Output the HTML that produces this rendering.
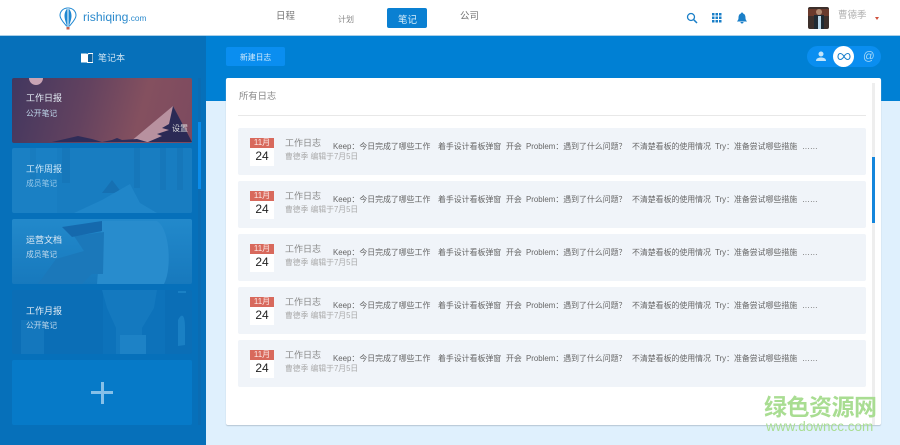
<!DOCTYPE html>
<html>
<head>
<meta charset="utf-8">
<style>
html,body{margin:0;padding:0}
body{width:900px;height:445px;overflow:hidden;position:relative;background:#dff0fd;font-family:"Liberation Sans","Noto Sans CJK SC",sans-serif;}
div,span,svg{position:absolute;white-space:nowrap}
.nav{font-size:9.5px;color:#777;line-height:12px}
.nb{left:12px;width:180px;height:65px;border-radius:2px;overflow:hidden}
.t1{left:14px;top:15px;font-size:9px;line-height:12px;color:#e4edf5}
.t2{left:14px;top:31px;font-size:7.8px;line-height:10px;color:#c0d9ec}
.row{left:238px;width:628px;height:47px;background:#f0f4f9;border-radius:2px}
.dh{left:12px;top:10px;width:24px;height:10px;background:#d8695c;color:#fbe9e6;font-size:8px;line-height:10px;text-align:center}
.db{left:12px;top:20px;width:24px;height:18px;background:#fff;color:#222;font-size:12px;line-height:16px;text-align:center}
.ti{left:47px;top:9px;font-size:9px;line-height:12px;color:#888}
.de{left:95px;top:13px;font-size:7.9px;line-height:11px;color:#666}
.su{left:47px;top:24px;font-size:7.8px;line-height:10px;color:#aaa}
</style>
</head>
<body>
<!-- header -->
<div style="left:0;top:0;width:900px;height:35px;background:#fff;border-bottom:1px solid #a9cfe8"></div>
<svg style="left:59px;top:7px" width="18" height="23" viewBox="0 0 18 23">
<path d="M9 1C4 1 1 4.500 1 8.500C1 12 5 16 7.500 19H10.500C13 16 17 12 17 8.500C17 4.500 14 1 9 1Z" fill="#fff" stroke="#1f88d2" stroke-width="1"/>
<path d="M9 1C6.500 3 5.500 6 5.500 9C5.500 12 7 16 8 19H10C11 16 12.500 12 12.500 9C12.500 6 11.500 3 9 1Z" fill="#1f88d2"/>
<path d="M9 1V19" stroke="#fff" stroke-width="1"/>
<rect x="7.500" y="20" width="3" height="2.500" fill="#c8604f"/>
</svg>
<div style="left:83px;top:10px;font-size:12.2px;line-height:15px;color:#2d8bcd">rishiqing<span style="position:static;font-size:8.3px">.com</span></div>
<div class="nav" style="left:276px;top:11px">日程</div>
<div class="nav" style="left:338px;top:14px;font-size:8px;color:#888">计划</div>
<div style="left:387px;top:8px;width:40px;height:20px;background:#0a80d2;border-radius:2px"></div>
<div class="nav" style="left:398px;top:15px;color:#d9eefb">笔记</div>
<div class="nav" style="left:460px;top:11px">公司</div>
<svg style="left:686px;top:12px" width="12" height="12" viewBox="0 0 12 12"><circle cx="5" cy="5" r="3.500" fill="none" stroke="#1a7fc8" stroke-width="1.300"/><path d="M7.800 7.800L11 11" stroke="#1a7fc8" stroke-width="1.500"/></svg>
<svg style="left:712px;top:13px" width="10" height="10" viewBox="0 0 10 10" fill="#1a7fc8"><rect x="0" y="0" width="2.500" height="2.500"/><rect x="3.500" y="0" width="2.500" height="2.500"/><rect x="7" y="0" width="2.500" height="2.500"/><rect x="0" y="3.500" width="2.500" height="2.500"/><rect x="3.500" y="3.500" width="2.500" height="2.500"/><rect x="7" y="3.500" width="2.500" height="2.500"/><rect x="0" y="7" width="2.500" height="2.500"/><rect x="3.500" y="7" width="2.500" height="2.500"/><rect x="7" y="7" width="2.500" height="2.500"/></svg>
<svg style="left:736px;top:12px" width="12" height="12" viewBox="0 0 12 12" fill="#1a7fc8"><path d="M6 0.500C7 .5 7 1.500 7 1.500C9 2 9.500 4 9.500 6C9.500 8 10.500 8.500 11 9.500H1C1.500 8.500 2.500 8 2.500 6C2.500 4 3 2 5 1.500C5 1.500 5 .5 6 .5Z"/><path d="M4.500 10H7.500C7.500 11 7 11.500 6 11.500C5 11.500 4.500 11 4.500 10Z"/></svg>
<div style="left:808px;top:7px;width:21px;height:22px;background:#3c2f2b;border-radius:2px;overflow:hidden">
<div style="left:0;top:2px;width:21px;height:7px;background:#6a3a2c"></div>
<div style="left:8px;top:2px;width:6px;height:6px;background:#b08a72;border-radius:50%"></div>
<div style="left:6px;top:8px;width:10px;height:14px;background:#1f2a33"></div>
<div style="left:9.500px;top:9px;width:3px;height:13px;background:#b9d6e8"></div>
</div>
<div style="left:838px;top:10px;font-size:9.5px;line-height:12px;color:#b0b0b0">曹德季</div>
<div style="left:875px;top:17px;width:0;height:0;border-left:2.500px solid transparent;border-right:2.500px solid transparent;border-top:3px solid #d0503c"></div>

<!-- sidebar -->
<div style="left:0;top:36px;width:206px;height:409px;background:#0670ba"></div>
<div style="left:198px;top:78px;width:3px;height:347px;background:#0a6cb3"></div>
<div style="left:198px;top:122px;width:3px;height:67px;background:#0a8cea"></div>
<svg style="left:81px;top:53px" width="12" height="10" viewBox="0 0 12 10"><path d="M0 0.500H5.500L6.500 1.500V9.500H0Z" fill="#fff"/><path d="M6.500 1.500L7.500 .5H12V9.500H6.500Z" fill="#0b5f9c" stroke="#fff" stroke-width="1"/></svg>
<div style="left:98px;top:52px;font-size:9px;line-height:12px;color:#cfe4f3">笔记本</div>

<div class="nb" style="top:78px;background:linear-gradient(105deg,#42375f 0%,#63425f 40%,#84505f 70%,#7d4a5f 100%)">
<div style="left:17px;top:-7px;width:14px;height:14px;border-radius:50%;background:#c9a4b4"></div>
<svg style="left:0;top:0" width="180" height="65" viewBox="0 0 180 65">
<path d="M118 64L161 28L168 42L150 64Z" fill="#b8919f"/>
<path d="M161 28L180 64H136L150 58L145 56L157 52L150 50L157 46Z" fill="#2b2a55"/>
<path d="M40 64L66 58L80 61L90 64ZM90 64L100 62L105 60L110 62L125 61L135 64Z" fill="#2f2c58"/>
</svg>
<div class="t1" style="top:14px">工作日报</div><div class="t2">公开笔记</div>
<div style="left:160px;top:46px;font-size:8px;line-height:10px;color:#ddd">设置</div>
</div>

<div class="nb" style="top:148px;background:#1a80c4">
<svg style="left:0;top:0" width="180" height="65" viewBox="0 0 180 65">
<rect x="45" y="0" width="135" height="65" fill="#187dc1"/>
<rect x="18" y="0" width="6" height="35" fill="#187cbf"/><rect x="50" y="0" width="8" height="35" fill="#1677ba"/>
<rect x="122" y="0" width="6" height="40" fill="#1677ba"/><rect x="148" y="0" width="6" height="42" fill="#1677ba"/><rect x="165" y="0" width="6" height="42" fill="#1677ba"/>
<path d="M90 45L100 32L110 45Z" fill="#1670b2"/>
<path d="M62 65L90 52L118 36L128 55L145 65Z" fill="#2086c9"/>
</svg>
<div class="t1" style="color:#cfe7f8">工作周报</div><div class="t2" style="color:#98c9ea">成员笔记</div>
</div>

<div class="nb" style="top:219px;background:linear-gradient(180deg,#2289cb,#1779bd)">
<svg style="left:0;top:0" width="180" height="65" viewBox="0 0 180 65">
<path d="M90 2H145C158 10 160 50 152 65H85Z" fill="#288ccd"/>
<path d="M62 17L92 13L91 55H80L70 65H26L44 40L72 32Z" fill="#1b78ba"/>
<path d="M50 8L90 2L90 12L60 18Z" fill="#1569ad"/>
</svg>
<div class="t1">运营文档</div><div class="t2">成员笔记</div>
</div>

<div class="nb" style="top:290px;height:64px;background:#0b6eb6">
<svg style="left:0;top:0" width="180" height="64" viewBox="0 0 180 64">
<rect x="9" y="30" width="23" height="34" fill="#1477bd"/>
<rect x="91" y="0" width="62" height="64" fill="#0d72ba"/>
<path d="M90 0H145L142 18L130 38V64H104V38L95 18Z" fill="#1479bf"/>
<rect x="108" y="45" width="26" height="19" fill="#1d82c6"/>
<path d="M166 30C170 22 173 25 173 38V55L166 56Z" fill="#1a80c4"/>
<rect x="166" y="1" width="8" height="2" fill="#1a80c4"/>
</svg>
<div class="t1">工作月报</div><div class="t2">公开笔记</div>
</div>

<div class="nb" style="top:360px;background:#067ac8">
<div style="left:79px;top:31px;width:22px;height:3px;background:#86c0e8"></div>
<div style="left:88.500px;top:22px;width:3px;height:22px;background:#86c0e8"></div>
</div>

<!-- main -->
<div style="left:206px;top:36px;width:694px;height:65px;background:#0080d4"></div>
<div style="left:226px;top:47px;width:59px;height:19px;background:#0a8ef0;border-radius:2px"></div>
<div style="left:240px;top:53px;font-size:7.800px;line-height:10px;color:#d4ecfc">新建日志</div>

<div style="left:807px;top:46px;width:74px;height:21px;border-radius:11px;background:#0a8ef0"></div>
<svg style="left:815px;top:51px" width="12" height="11" viewBox="0 0 12 11" fill="#c5e5fa"><circle cx="6" cy="3" r="2.500"/><path d="M1 10C1 7.500 3 6.500 6 6.500C9 6.500 11 7.500 11 10Z"/></svg>
<div style="left:833px;top:46px;width:21px;height:21px;border-radius:50%;background:#fff"></div>
<svg style="left:837px;top:52px" width="14" height="9" viewBox="0 0 14 9"><path d="M7 4.500C5.500 2 4.500 1.500 3.300 1.500C1.800 1.500 1 3 1 4.500C1 6 1.800 7.500 3.300 7.500C4.500 7.500 5.500 7 7 4.500C8.500 2 9.500 1.500 10.700 1.500C12.200 1.500 13 3 13 4.500C13 6 12.200 7.500 10.700 7.500C9.500 7.500 8.500 7 7 4.500Z" fill="none" stroke="#1a80cc" stroke-width="1.100"/></svg>
<div style="left:863px;top:50px;font-size:11.500px;line-height:14px;color:#a9d8f7">@</div>

<!-- card -->
<div style="left:226px;top:78px;width:655px;height:347px;background:#fff;border-radius:2px;box-shadow:0 1px 1px #b5c6d3"></div>
<div style="left:239px;top:90px;font-size:9.300px;line-height:12px;color:#888">所有日志</div>
<div style="left:238px;top:115px;width:628px;height:1px;background:#e8e8e8"></div>
<div style="left:872px;top:83px;width:3px;height:342px;background:#eeeeee"></div>
<div style="left:872px;top:157px;width:3px;height:66px;background:#1486dc"></div>

<div class="row" style="top:128px"><div class="dh">11月</div><div class="db">24</div><div class="ti">工作日志</div><div class="de"><span style="left:0">Keep：今日完成了哪些工作</span><span style="left:105px">着手设计看板弹窗</span><span style="left:173px">开会</span><span style="left:193px">Problem：遇到了什么问题？</span><span style="left:299px">不清楚看板的使用情况</span><span style="left:382px">Try：准备尝试哪些措施</span><span style="left:469px">……</span></div><div class="su">曹德季 编辑于7月5日</div></div>
<div class="row" style="top:181px"><div class="dh">11月</div><div class="db">24</div><div class="ti">工作日志</div><div class="de"><span style="left:0">Keep：今日完成了哪些工作</span><span style="left:105px">着手设计看板弹窗</span><span style="left:173px">开会</span><span style="left:193px">Problem：遇到了什么问题？</span><span style="left:299px">不清楚看板的使用情况</span><span style="left:382px">Try：准备尝试哪些措施</span><span style="left:469px">……</span></div><div class="su">曹德季 编辑于7月5日</div></div>
<div class="row" style="top:234px"><div class="dh">11月</div><div class="db">24</div><div class="ti">工作日志</div><div class="de"><span style="left:0">Keep：今日完成了哪些工作</span><span style="left:105px">着手设计看板弹窗</span><span style="left:173px">开会</span><span style="left:193px">Problem：遇到了什么问题？</span><span style="left:299px">不清楚看板的使用情况</span><span style="left:382px">Try：准备尝试哪些措施</span><span style="left:469px">……</span></div><div class="su">曹德季 编辑于7月5日</div></div>
<div class="row" style="top:287px"><div class="dh">11月</div><div class="db">24</div><div class="ti">工作日志</div><div class="de"><span style="left:0">Keep：今日完成了哪些工作</span><span style="left:105px">着手设计看板弹窗</span><span style="left:173px">开会</span><span style="left:193px">Problem：遇到了什么问题？</span><span style="left:299px">不清楚看板的使用情况</span><span style="left:382px">Try：准备尝试哪些措施</span><span style="left:469px">……</span></div><div class="su">曹德季 编辑于7月5日</div></div>
<div class="row" style="top:340px"><div class="dh">11月</div><div class="db">24</div><div class="ti">工作日志</div><div class="de"><span style="left:0">Keep：今日完成了哪些工作</span><span style="left:105px">着手设计看板弹窗</span><span style="left:173px">开会</span><span style="left:193px">Problem：遇到了什么问题？</span><span style="left:299px">不清楚看板的使用情况</span><span style="left:382px">Try：准备尝试哪些措施</span><span style="left:469px">……</span></div><div class="su">曹德季 编辑于7月5日</div></div>

<!-- watermark -->
<div style="left:764px;top:392px;font-size:23px;line-height:26px;font-weight:bold;letter-spacing:-0.500px;color:#a9dd92;font-family:'Noto Sans CJK SC',sans-serif">绿色资源网</div>
<div style="left:766px;top:419px;font-size:13.500px;line-height:16px;color:#a9dd92">www.downcc.com</div>
</body>
</html>
